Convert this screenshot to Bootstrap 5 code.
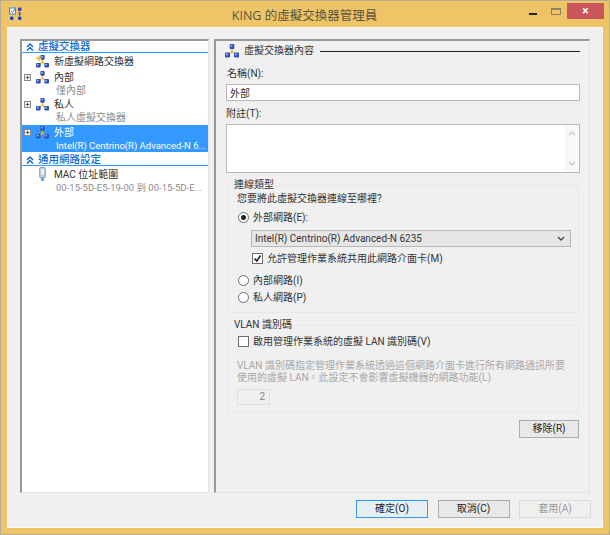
<!DOCTYPE html>
<html lang="zh-Hant"><head><meta charset="utf-8"><title>KING 的虛擬交換器管理員</title>
<link href="https://cdn.jsdelivr.net/npm/bootstrap@5.3.0/dist/css/bootstrap.min.css" rel="stylesheet">
<style>
html,body{margin:0;padding:0;background:#fff;overflow:hidden}
body{font-family:Roboto,"Noto Sans CJK TC",sans-serif;font-size:10px;line-height:12px;color:#333}
.vwin{width:610px;height:535px;background:#eec466;border:1px solid #b9ae94;padding:0 6px 6px;display:flex;flex-direction:column}
.tbar{height:26px;flex:none;display:flex;align-items:flex-start}
.tbar svg.appi{margin:6px 0 0 2px;flex:none}
.ttl{flex:1;text-align:center;font-family:"Open Sans","Noto Sans CJK TC",sans-serif;font-size:12.5px;line-height:16px;color:#5c5340;padding:7px 0 0 57px}
.ctl{flex:none;display:flex;align-items:flex-start;margin-right:-1px}
.cmin{width:8px;height:2px;background:#222;margin:12px 0 0}
.cmax{width:10px;height:7px;border:1px solid #8d8160;border-top-width:2px;margin:7px 0 0 14px}
.cx{width:37px;height:16px;background:#c9565a;color:#fff;margin:2px 0 0 6px;font-size:12px;line-height:16px;text-align:center;font-weight:700}
.cli{flex:1;background:#f0f0f0;border:1px solid #f8f8f8;padding:11px 12px 0 12px;display:flex;flex-direction:column}
.mainr{height:454px;flex:none;display:flex;gap:5px}
.ltree{width:189px;flex:none;background:#fff;border-left:2px solid #999;border-top:2px solid #999;border-right:1px solid #e4e4e4;border-bottom:1px solid #e4e4e4}
.rpane{flex:1;border-left:2px solid #999;border-top:2px solid #999;border-right:1px solid #e4e4e4;border-bottom:1px solid #e4e4e4;padding:0 9px 0 10px;display:flex;flex-direction:column;min-width:0}
.shead{height:12px;border-bottom:1px solid #3399ff;display:flex;align-items:center;color:#0a6bd6;font-weight:500;font-size:10.5px}
.shead span{padding-top:1px}
.shead svg{margin:0 4px 0 4px;flex:none}
.shead2{margin-top:2px}
.node{display:flex;align-items:center;height:14px}
.node>span:last-child{padding-top:1px}
.nfirst{height:17px}
.ngap{margin-top:2px}
.nmac{margin-top:1px}
.exp{width:7px;height:7px;border:1px solid #8c8c8c;background:#f4f4f4;margin-left:2px;flex:none;font-size:8px;line-height:5px;text-align:center;color:#222}
.noexp{width:9px;flex:none}
.node svg{margin:0 5px 0 5px;flex:none}
.nsub{padding-left:34px;padding-top:1px;color:#8d8d8d;height:11px;line-height:11px;white-space:nowrap;font-size:10px}
.nsm{font-size:9.5px}
.sel{background:#3399ff;color:#fff;margin-top:3px;padding:1px 0 2px}
.sel .node{height:13px}
.sel .nsub{color:#fff}
.lg{display:flex;align-items:center;height:12px;margin:4px 0 0 -1px}
.lg svg{margin-right:5px;flex:none}
.lg hr{flex:1;margin:0 0 0 6px;border:0;border-top:1px solid #222;opacity:1}
.flab{margin:0;height:12px;line-height:12px;display:block;font-size:10px;color:#333;padding-top:1px}
.flab1{margin-top:10px;padding-left:1px}
.flab2{margin-top:6px}
.vin.form-control{height:17px;min-height:0;padding:0 3px;border:1px solid #b8b8b8;border-radius:0;font-size:10px;line-height:14px;color:#333;margin-top:5px;background:#fff}
.vtxt{height:49px;background:#fff;border:1px solid #b8b8b8;margin-top:5px;display:flex;justify-content:flex-end;flex:none}
.vsb{width:14px;background:#f8f8f8;display:flex;flex-direction:column;justify-content:space-between;align-items:center;padding:6px 0}
.gbox{border:1px solid #e8e8e8;margin-left:1px;margin-right:1px;padding:0 9px}
.gl{display:table;margin:-8px 0 0 -4px;padding:1px 1px 0;background:#f0f0f0;line-height:11px;height:12px;font-size:10px}
.g1{height:128px;margin-top:12px}
.g2{height:88px;margin-top:12px}
.gq{margin-top:3px}
.rrow{display:flex;align-items:center;height:12px;gap:4px;margin-left:1px}
.rrow>span:last-child{padding-top:1px}
.r1{margin-top:6px}
.r2{margin:5px 0 0 15px}
.r3{margin-top:10px}
.r4{margin-top:5px}
.r5{margin-top:5px}
.rd{width:11px;height:11px;border:1px solid #6d6d6d;border-radius:50%;background:#fff;flex:none;display:flex;align-items:center;justify-content:center}
.rd i{width:5px;height:5px;background:#222;border-radius:50%}
.ck{width:11px;height:11px;border:1px solid #6d6d6d;background:#fff;flex:none;display:flex;align-items:center;justify-content:center}
.vsel{height:17px;border:1px solid #b8b8b8;background:#e6e6e6;margin:7px 0 0 14px;display:flex;align-items:center;justify-content:space-between;padding:0 5px 0 3px;width:320px;font-size:10px}
.help{color:#a8a8a8;line-height:11.5px;font-size:10px;margin-top:13px;white-space:nowrap}
.spin{width:33px;height:16px;border:1px solid #e0e0e0;background:#f0f0f0;color:#888;text-align:right;padding:1px 4px 0 0;margin-top:6px;font-size:10px}
.vbtn.btn{height:18px;border-radius:0;border:1px solid #acacac;background:#e8e8e8;padding:0;font-size:10px;line-height:16px;color:#222;width:72px;font-weight:400}
.vbtn.dft{border:1px solid #3399ff;background:#e6eef6}
.vbtn.dis{border-color:#dcdcdc;background:#efefef;color:#9a9a9a;opacity:1}
.rmrow{display:flex;justify-content:flex-end;margin:7px 1px 0 0}
.rmrow .vbtn.btn{width:60px}
.footr{display:flex;justify-content:flex-end;gap:9.5px;margin:7px -1px 0 0}
</style></head>
<body>
<svg width="0" height="0" class="d-none">
<defs>
<symbol id="net" viewBox="0 0 14 14">
<path d="M7 4V7.5L3.5 10.5M7 7.5l3.5 3" stroke="#e2b93a" stroke-width="1.5" fill="none"/>
<rect x="4.7" y="0" width="4.6" height="5" rx="1" fill="#2a4fbe"/><rect x="5.7" y="1" width="1.6" height="1.6" fill="#9fc0f0"/>
<rect x="0" y="8.5" width="5" height="5" rx="1" fill="#2a4fbe"/><rect x="1" y="9.5" width="1.8" height="1.8" fill="#9fc0f0"/>
<rect x="9" y="8.5" width="5" height="5" rx="1" fill="#2a4fbe"/><rect x="10" y="9.5" width="1.8" height="1.8" fill="#9fc0f0"/>
</symbol>
<symbol id="chev" viewBox="0 0 8 8">
<path d="M1 4l3-3 3 3M1 7.5l3-3 3 3" stroke="#0a5fd0" stroke-width="1.4" fill="none"/>
</symbol>
</defs>
</svg>
<div class="vwin">
 <div class="tbar">
  <svg class="appi" width="14" height="14" viewBox="0 0 14 14"><rect x="0.5" y="1" width="6" height="6" fill="#fff" stroke="#3a8fd8"/><path d="M2 4l1.5 1.5L6 2" stroke="#2a6fc0" fill="none"/><rect x="9" y="0.5" width="3.4" height="3.4" rx="1" fill="#2447b5"/><rect x="1" y="9.5" width="3.4" height="3.4" rx="1" fill="#2447b5"/><rect x="9" y="9.5" width="3.4" height="3.4" rx="1" fill="#2447b5"/><rect x="9.8" y="5" width="1.6" height="3.5" fill="#2447b5"/></svg>
  <div class="ttl">KING 的虛擬交換器管理員</div>
  <div class="ctl"><div class="cmin"></div><div class="cmax"></div><div class="cx">×</div></div>
 </div>
 <div class="cli">
  <div class="mainr">
   <div class="ltree">
    <div class="shead"><svg width="8" height="8"><use href="#chev"/></svg><span>虛擬交換器</span></div>
    <div class="node nfirst"><span class="noexp"></span><svg width="13" height="13" viewBox="0 0 14 14"><use href="#net"/><path d="M0 3.5h6M3 .5v6" stroke="#e8bd35" stroke-width="1.8"/></svg><span>新虛擬網路交換器</span></div>
    <div class="node"><span class="exp">+</span><svg width="13" height="13"><use href="#net"/></svg><span>內部</span></div>
    <div class="nsub">僅內部</div>
    <div class="node ngap"><span class="exp">+</span><svg width="13" height="13"><use href="#net"/></svg><span>私人</span></div>
    <div class="nsub">私人虛擬交換器</div>
    <div class="sel">
     <div class="node"><span class="exp">+</span><svg width="13" height="13"><use href="#net"/></svg><span>外部</span></div>
     <div class="nsub"><span class="nsm">Intel(R) Centrino(R) Advanced-N 6...</span></div>
    </div>
    <div class="shead shead2"><svg width="8" height="8"><use href="#chev"/></svg><span>通用網路設定</span></div>
    <div class="node nmac"><span class="noexp"></span><svg width="13" height="15" viewBox="0 0 14 16"><rect x="4" y="0.5" width="6" height="11" rx="1" fill="#c7d2dc" stroke="#7f95a8"/><rect x="5.5" y="2" width="3" height="6" fill="#eef2f5"/><path d="M5 12h4l-1 3H6z" fill="#3da0e0"/></svg><span>MAC 位址範圍</span></div>
    <div class="nsub"><span class="nsm">00-15-5D-E5-19-00 到 00-15-5D-E...</span></div>
   </div>
   <div class="rpane">
    <div class="lg"><svg width="14" height="14"><use href="#net"/></svg><span>虛擬交換器內容</span><hr></div>
    <label class="flab flab1">名稱(N):</label>
    <input class="form-control vin" value="外部">
    <label class="flab flab2">附註(T):</label>
    <div class="vtxt"><div class="vsb"><svg width="8" height="5"><path d="M1 4l3-3 3 3" stroke="#c8c8c8" stroke-width="1.3" fill="none"/></svg><svg width="8" height="5"><path d="M1 1l3 3 3-3" stroke="#c8c8c8" stroke-width="1.3" fill="none"/></svg></div></div>
    <div class="gbox g1">
     <div class="gl">連線類型</div>
     <div class="gq">您要將此虛擬交換器連線至哪裡?</div>
     <div class="rrow r1"><span class="rd"><i></i></span><span>外部網路(E):</span></div>
     <div class="vsel"><span>Intel(R) Centrino(R) Advanced-N 6235</span><svg width="8" height="5"><path d="M1 1l3 3 3-3" stroke="#444" stroke-width="1.3" fill="none"/></svg></div>
     <div class="rrow r2"><span class="ck"><svg width="9" height="9"><path d="M1.5 4.5L3.8 7 7.5 1.5" stroke="#222" stroke-width="1.6" fill="none"/></svg></span><span>允許管理作業系統共用此網路介面卡(M)</span></div>
     <div class="rrow r3"><span class="rd"></span><span>內部網路(I)</span></div>
     <div class="rrow r4"><span class="rd"></span><span>私人網路(P)</span></div>
    </div>
    <div class="gbox g2">
     <div class="gl">VLAN 識別碼</div>
     <div class="rrow r5"><span class="ck"></span><span>啟用管理作業系統的虛擬 LAN 識別碼(V)</span></div>
     <div class="help">VLAN 識別碼指定管理作業系統透過這個網路介面卡進行所有網路通訊所要<br>使用的虛擬 LAN。此設定不會影響虛擬機器的網路功能(L)</div>
     <div class="spin">2</div>
    </div>
    <div class="rmrow"><button class="btn vbtn">移除(R)</button></div>
   </div>
  </div>
  <div class="footr">
   <button class="btn vbtn dft">確定(O)</button>
   <button class="btn vbtn">取消(C)</button>
   <button class="btn vbtn dis" disabled>套用(A)</button>
  </div>
 </div>
</div>
</body></html>
